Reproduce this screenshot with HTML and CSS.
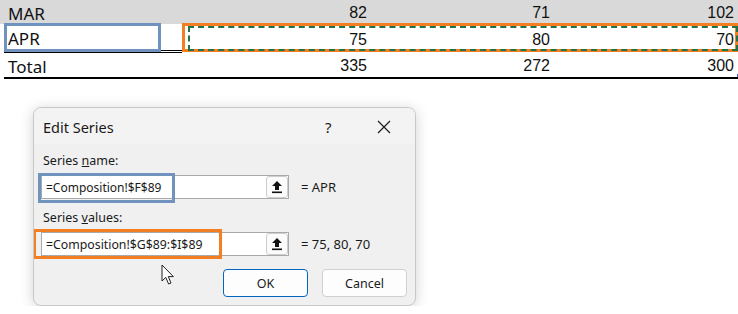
FILE: index.html
```html
<!DOCTYPE HTML>
<html>
	<head>
		<meta charset='utf-8' />
		<title>Edit Series</title>
		<link rel="stylesheet" href="styles.css">
	</head>
	<body>
		<div id='sheet'>
			<div class='row grey'>
				<div class='cell label'>MAR</div>
				<div class='cell num'>82</div>
				<div class='cell num'>71</div>
				<div class='cell num'>102</div>
			</div>
			<div class='row apr'>
				<div class='cell label dbl'>APR</div>
				<div class='cell num'>75</div>
				<div class='cell num'>80</div>
				<div class='cell num'>70</div>
			</div>
			<div class='row total'>
				<div class='cell label'>Total</div>
				<div class='cell num'>335</div>
				<div class='cell num'>272</div>
				<div class='cell num'>300</div>
			</div>
			<span class='box-name'></span>
			<span class='box-values'></span>
			<span class='marching'></span>
			<span class='handle'></span>
		</div>

		<div id='dialog'>
			<div class='title'>
				<span class='caption'>Edit Series</span>
				<span class='help'>?</span>
				<span class='close'>
					<svg width='14' height='14' viewBox='0 0 14 14'><path d='M1 1 L13 13 M13 1 L1 13' stroke='#1a1a1a' stroke-width='1.2' fill='none'/></svg>
				</span>
			</div>
			<div class='content'>
				<div class='field-label'>Series <u>n</u>ame:</div>
				<div class='field'>
					<div class='input'>
						<span class='ref name-ref'>=Composition!$F$89</span>
						<span class='pick'>
							<svg width='12' height='14' viewBox='0 0 12 14'><path d='M6 1 L11 6 L8 6 L8 10 L4 10 L4 6 L1 6 Z' fill='#111'/><rect x='1' y='11.5' width='10' height='1.6' fill='#111'/></svg>
						</span>
					</div>
					<span class='result'>= APR</span>
				</div>
				<div class='field-label second'>Series <u>v</u>alues:</div>
				<div class='field'>
					<div class='input'>
						<span class='ref values-ref'>=Composition!$G$89:$I$89</span>
						<span class='pick'>
							<svg width='12' height='14' viewBox='0 0 12 14'><path d='M6 1 L11 6 L8 6 L8 10 L4 10 L4 6 L1 6 Z' fill='#111'/><rect x='1' y='11.5' width='10' height='1.6' fill='#111'/></svg>
						</span>
					</div>
					<span class='result'>= 75, 80, 70</span>
				</div>
				<div class='buttons'>
					<span class='btn ok'>OK</span>
					<span class='btn'>Cancel</span>
				</div>
			</div>
			<svg class='cursor' width='14' height='22' viewBox='0 0 14 22'><path d='M1 1 L1 17 L4.8 13.4 L7.6 20 L10 19 L7.3 12.6 L12.4 12.6 Z' fill='#fff' stroke='#222' stroke-width='1' stroke-linejoin='round'/></svg>
		</div>
	</body>
</html>
```
FILE: styles.css
```css
body{margin:0;background:#fff;font-family:"Noto Sans","Liberation Sans",sans-serif;}

#sheet{
	position:relative;
	padding-bottom:2px;
	border-bottom:2px solid #000;
	margin-left:4px;
	width:734px;
}
#sheet .row{
	display:grid;
	grid-template-columns:178px 187px 183px 184px;
	font-size:17px;
	color:#111;
}
#sheet .row.grey{height:24px;background:#d9d9d9;margin-left:-4px;padding-left:4px;}
#sheet .row.apr{height:29px;}
#sheet .row.total{height:22px;}
#sheet .cell{
	display:flex;
	align-items:center;
	padding:0 2px 0 4px;
	line-height:1;
}
#sheet .cell.num{
	justify-content:flex-end;
	font-family:"Liberation Sans",sans-serif;
	font-size:16px;
}
#sheet .row.grey .cell{padding-top:2px;}
#sheet .row.apr .cell{padding-top:2px;}
#sheet .row.total .cell{padding-top:4px;}
#sheet .cell.dbl{border-bottom:3px double #000;}

#sheet .box-name{
	position:absolute;
	left:0;
	top:23px;
	width:151px;
	height:23px;
	border:3px solid #7093be;
}
#sheet .box-values{
	position:absolute;
	left:178px;
	top:23px;
	width:550px;
	height:23px;
	border:3px solid #f47f23;
}
#sheet .marching{
	position:absolute;
	left:184px;
	top:26px;
	width:546px;
	height:21px;
	border:2px dashed #217346;
}
#sheet .handle{
	position:absolute;
	right:-2px;
	bottom:0;
	width:3px;
	height:3px;
	background:#4a5fc1;
}

#dialog{
	position:relative;
	width:383px;
	height:199px;
	margin:28px 0 0 33px;
	border-radius:8px;
	background:#f0f0f0;
	border:1px solid #c8c8c8;
	box-sizing:border-box;
	box-shadow:0 2px 14px rgba(0,0,0,0.18);
	overflow:hidden;
}
#dialog .title{
	display:flex;
	align-items:center;
	height:36px;
	padding:0 0 0 9px;
	background:#f3f3f3;
	font-size:14.5px;
	color:#1a1a1a;
}
#dialog .caption{flex:1;padding-top:2px;}
#dialog .help{width:52px;font-size:15px;padding-top:2px;}
#dialog .close{width:38px;padding-top:3px;}
#dialog .content{
	padding:8px 0 0 7px;
	font-size:12.5px;
	color:#1a1a1a;
}
#dialog .field-label{padding-left:2px;height:18px;}
#dialog .field-label.second{margin-top:10px;}
#dialog .field{
	display:flex;
	align-items:center;
	gap:12px;
	margin-top:5px;
	font-size:13px;
}
#dialog .input{
	display:flex;
	align-items:center;
	width:248px;
	height:24px;
	background:#fff;
	border:1px solid #a9a9a9;
	box-sizing:border-box;
	position:relative;
}
#dialog .ref{flex:1;padding-left:4px;font-size:12px;}
#dialog .values-ref{font-size:12.3px;}
#dialog .pick{
	display:flex;
	align-items:center;
	justify-content:center;
	width:22px;
	height:22px;
	background:#fbfbfb;
	border:1px solid #cdcdcd;
	border-radius:3px;
	box-sizing:border-box;
}
#dialog .name-ref::after{
	content:'';
	position:absolute;
	left:-4px;
	top:-3px;
	width:131px;
	height:24px;
	border:3px solid #7093be;
}
#dialog .values-ref::after{
	content:'';
	position:absolute;
	left:-9px;
	top:-4px;
	width:183px;
	height:24px;
	border:3px solid #f47f23;
}
#dialog .buttons{
	display:flex;
	gap:14px;
	margin:13px 0 0 182px;
}
#dialog .btn{
	display:flex;
	align-items:center;
	justify-content:center;
	width:85px;
	height:28px;
	background:#fdfdfd;
	border:1px solid #d0d0d0;
	border-radius:4px;
	box-sizing:border-box;
}
#dialog .btn.ok{border-color:#0067c0;}
#dialog .cursor{
	position:absolute;
	left:127px;
	top:156px;
}
```
